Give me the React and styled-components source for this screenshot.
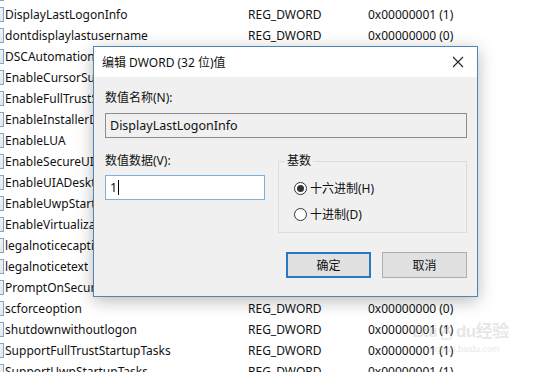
import React from 'react';
import styled, { createGlobalStyle } from 'styled-components';

const GlobalStyle = createGlobalStyle`
  html, body {
    margin: 0;
    padding: 0;
    background: #ffffff;
  }
`;

const UI_FONT = `"Noto Sans", "Noto Sans CJK SC", sans-serif`;

// Ventana del editor de registro (fondo)
const Screen = styled.div`
  position: relative;
  width: 538px;
  height: 372px;
  overflow: hidden;
  background: #ffffff;
  font-family: ${UI_FONT};
  font-size: 12px;
  color: #111;
`;

const ValueList = styled.div`
  display: flex;
  flex-direction: column;
  margin-top: -17px;
`;

const Row = styled.div`
  display: grid;
  grid-template-columns: 248px 120px 1fr;
  height: 21px;
  align-items: center;
  white-space: nowrap;
`;

const NameCell = styled.div`
  display: flex;
  align-items: center;
  gap: 1px;
  overflow: hidden;
`;

const ValueIcon = styled.span`
  display: inline-block;
  width: 3px;
  height: 13px;
  border: 1px solid #8aa3bf;
  border-left: none;
  background: linear-gradient(180deg, #eef3f8 0%, #dfe7f0 100%);
  flex-shrink: 0;
`;

const Cell = styled.span`
  overflow: hidden;
`;

// Diálogo "Editar DWORD"
const Dialog = styled.div`
  position: absolute;
  left: 93px;
  top: 46px;
  width: 383px;
  height: 249px;
  border: 1px solid #4a86b8;
  background: #f0f0f0;
  box-shadow: 0 4px 16px rgba(0, 0, 0, 0.28);
  display: flex;
  flex-direction: column;
`;

const TitleBar = styled.div`
  height: 30px;
  background: #ffffff;
  display: flex;
  align-items: center;
  justify-content: space-between;
  padding: 0 10px 0 8px;
`;

const Title = styled.span`
  font-size: 12px;
  color: #111;
`;

const CloseButton = styled.span`
  display: flex;
  width: 12px;
  height: 12px;
  margin-right: 3px;
`;

const Body = styled.div`
  flex: 1;
  padding: 13px 10px 0 11px;
  display: flex;
  flex-direction: column;
`;

const Label = styled.div`
  line-height: 16px;
  color: #111;
`;

const TextBox = styled.div`
  box-sizing: border-box;
  height: 25px;
  width: ${p => p.width || '100%'};
  border: 1px solid ${p => (p.focused ? '#7fb0dc' : '#8c8c8c')};
  background: ${p => (p.focused ? '#ffffff' : '#f0f0f0')};
  display: flex;
  align-items: center;
  padding-left: 4px;
  font-size: 12.5px;
  color: #111;
`;

const Caret = styled.span`
  display: inline-block;
  width: 1px;
  height: 15px;
  background: #000;
  margin-left: 1px;
`;

const Columns = styled.div`
  display: flex;
  justify-content: space-between;
  align-items: flex-start;
  margin-top: 14px;
`;

const DataColumn = styled.div`
  display: flex;
  flex-direction: column;
  gap: 6px;
  padding-top: 1px;
`;

const GroupBox = styled.fieldset`
  box-sizing: border-box;
  width: 189px;
  height: 79px;
  margin: 2px 0 0 0;
  border: 1px solid #dcdcdc;
  padding: 11px 0 0 15px;
  display: flex;
  flex-direction: column;
  gap: 8px;
`;

const Legend = styled.legend`
  padding: 0 2px;
  margin-left: -9px;
  font-size: 12px;
  line-height: 14px;
  color: #111;
`;

const RadioRow = styled.div`
  display: flex;
  align-items: center;
  gap: 3px;
  height: 18px;
`;

const RadioCircle = styled.span`
  box-sizing: border-box;
  width: 13px;
  height: 13px;
  border-radius: 50%;
  border: 1px solid #333;
  background: #fff;
  display: flex;
  align-items: center;
  justify-content: center;

  &::after {
    content: '';
    width: 7px;
    height: 7px;
    border-radius: 50%;
    background: ${p => (p.checked ? '#333' : 'transparent')};
  }
`;

const ButtonRow = styled.div`
  display: flex;
  justify-content: flex-end;
  gap: 11px;
  margin-top: 19px;
`;

const Button = styled.div`
  box-sizing: border-box;
  width: 85px;
  height: 26px;
  background: #e1e1e1;
  border: ${p => (p.primary ? '2px solid #2a78c0' : '1px solid #adadad')};
  display: flex;
  align-items: center;
  justify-content: center;
  font-size: 12px;
  color: #111;
`;

// Marca de agua
const Watermark = styled.div`
  position: absolute;
  left: 412px;
  top: 320px;
  display: flex;
  flex-direction: column;
  align-items: flex-start;
  color: rgba(170, 170, 170, 0.3);
  pointer-events: none;
  white-space: nowrap;
`;

const WatermarkLogo = styled.div`
  display: flex;
  align-items: center;
  font-family: "Liberation Sans", "Noto Sans CJK SC", sans-serif;
  font-size: 17px;
  font-weight: bold;
  line-height: 24px;
  letter-spacing: -0.5px;
`;

const WatermarkUrl = styled.div`
  font-family: "Liberation Sans", sans-serif;
  font-size: 9px;
  margin-left: 15px;
`;

const rows = [
  ['disablecad', 'REG_DWORD', '0x00000000 (0)'],
  ['DisplayLastLogonInfo', 'REG_DWORD', '0x00000001 (1)'],
  ['dontdisplaylastusername', 'REG_DWORD', '0x00000000 (0)'],
  ['DSCAutomationHostEnabled', 'REG_DWORD', '0x00000002 (2)'],
  ['EnableCursorSuppression', 'REG_DWORD', '0x00000001 (1)'],
  ['EnableFullTrustStartupTasks', 'REG_DWORD', '0x00000002 (2)'],
  ['EnableInstallerDetection', 'REG_DWORD', '0x00000001 (1)'],
  ['EnableLUA', 'REG_DWORD', '0x00000001 (1)'],
  ['EnableSecureUIAPaths', 'REG_DWORD', '0x00000001 (1)'],
  ['EnableUIADesktopToggle', 'REG_DWORD', '0x00000000 (0)'],
  ['EnableUwpStartupTasks', 'REG_DWORD', '0x00000002 (2)'],
  ['EnableVirtualization', 'REG_DWORD', '0x00000001 (1)'],
  ['legalnoticecaption', 'REG_SZ', ''],
  ['legalnoticetext', 'REG_SZ', ''],
  ['PromptOnSecureDesktop', 'REG_DWORD', '0x00000001 (1)'],
  ['scforceoption', 'REG_DWORD', '0x00000000 (0)'],
  ['shutdownwithoutlogon', 'REG_DWORD', '0x00000001 (1)'],
  ['SupportFullTrustStartupTasks', 'REG_DWORD', '0x00000001 (1)'],
  ['SupportUwpStartupTasks', 'REG_DWORD', '0x00000001 (1)'],
];

const CloseIcon = () => (
  <svg width="12" height="12" viewBox="0 0 12 12">
    <path d="M1 1 L11 11 M11 1 L1 11" stroke="#222" strokeWidth="1.1" fill="none" />
  </svg>
);

const Paw = () => (
  <svg width="17" height="17" viewBox="0 0 22 22" style={{ margin: '0 1px', flexShrink: 0 }}>
    <g fill="none" stroke="currentColor" strokeWidth="1.8">
      <ellipse cx="6" cy="7" rx="2.2" ry="3" />
      <ellipse cx="11" cy="4.5" rx="2.2" ry="3" />
      <ellipse cx="16" cy="7" rx="2.2" ry="3" />
      <path d="M5 17 C5 12 8 10.5 11 10.5 C14 10.5 17 12 17 17 C17 20 14 20 11 19 C8 20 5 20 5 17 Z" />
    </g>
  </svg>
);

export default function App() {
  return (
    <Screen>
      <GlobalStyle />
      <ValueList>
        {rows.map(([name, type, data]) => (
          <Row key={name}>
            <NameCell>
              <ValueIcon />
              <Cell>{name}</Cell>
            </NameCell>
            <Cell>{type}</Cell>
            <Cell>{data}</Cell>
          </Row>
        ))}
      </ValueList>

      <Watermark>
        <WatermarkLogo>
          <span>Bai</span>
          <Paw />
          <span>du经验</span>
        </WatermarkLogo>
        <WatermarkUrl>jingyan.baidu.com</WatermarkUrl>
      </Watermark>

      <Dialog>
        <TitleBar>
          <Title>编辑 DWORD (32 位)值</Title>
          <CloseButton>
            <CloseIcon />
          </CloseButton>
        </TitleBar>
        <Body>
          <Label>数值名称(N):</Label>
          <TextBox style={{ marginTop: 7 }}>DisplayLastLogonInfo</TextBox>
          <Columns>
            <DataColumn>
              <Label>数值数据(V):</Label>
              <TextBox focused width="160px">
                1<Caret />
              </TextBox>
            </DataColumn>
            <GroupBox>
              <Legend>基数</Legend>
              <RadioRow>
                <RadioCircle checked />
                <span>十六进制(H)</span>
              </RadioRow>
              <RadioRow>
                <RadioCircle />
                <span>十进制(D)</span>
              </RadioRow>
            </GroupBox>
          </Columns>
          <ButtonRow>
            <Button primary>确定</Button>
            <Button>取消</Button>
          </ButtonRow>
        </Body>
      </Dialog>
    </Screen>
  );
}
